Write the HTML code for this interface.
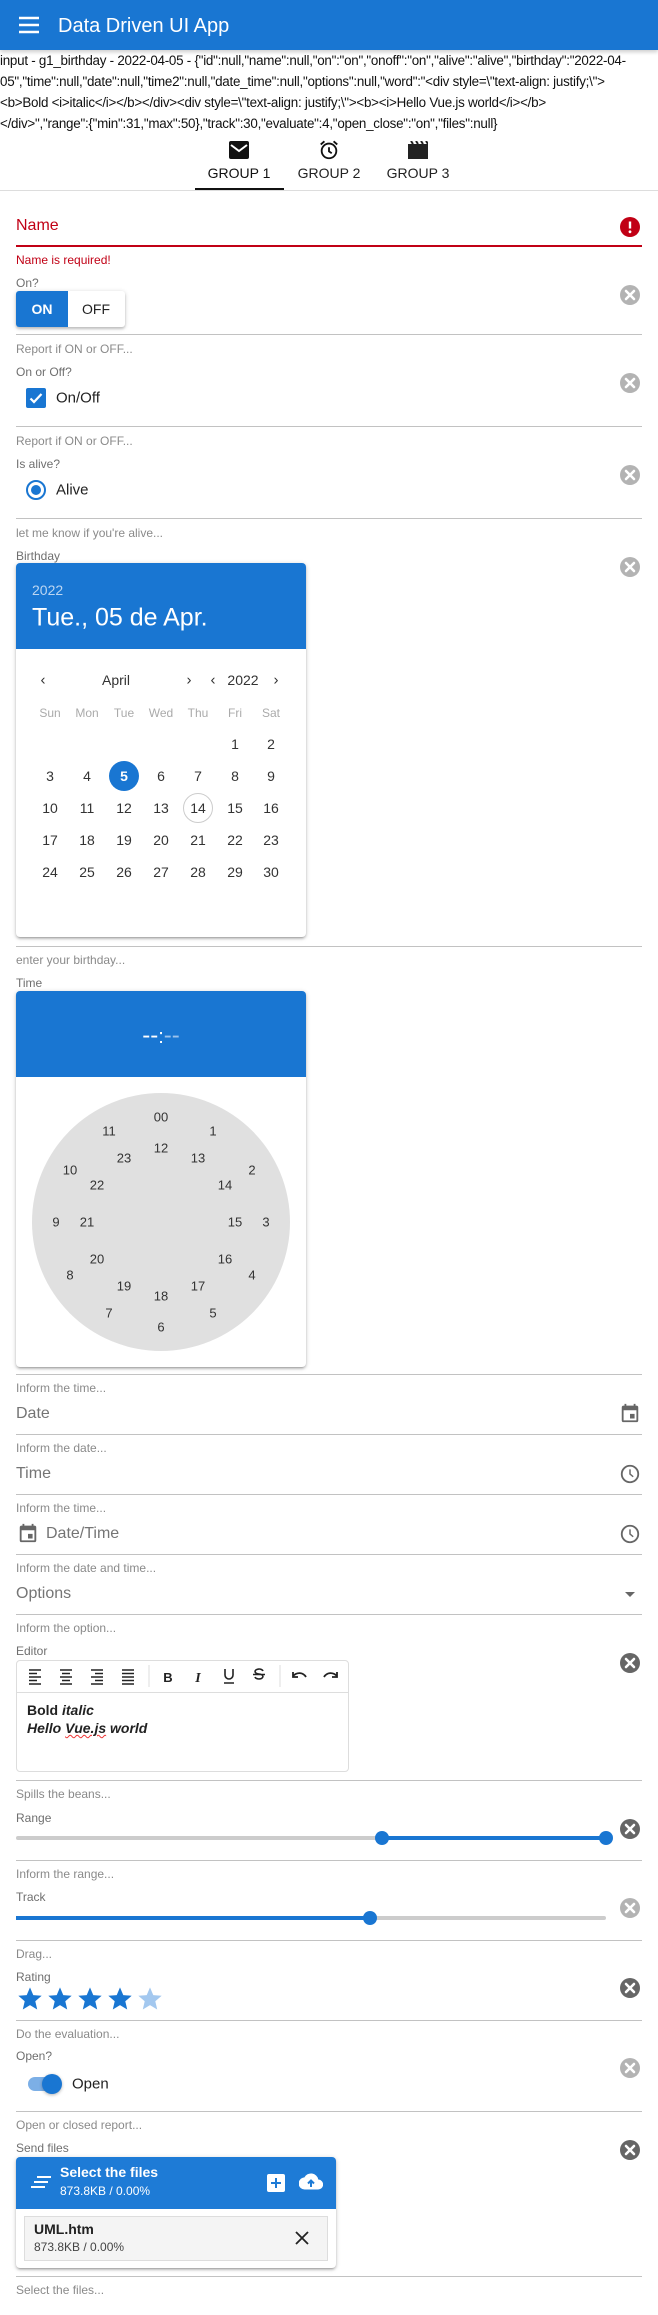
<!DOCTYPE html>
<html><head><meta charset="utf-8">
<style>
*{margin:0;padding:0;box-sizing:border-box}
body{width:658px;height:2315px;position:relative;overflow:hidden;background:#fff;font-family:"Liberation Sans",Arial,sans-serif;color:#212121}
.a{position:absolute}
.t{position:absolute;white-space:nowrap;line-height:1;transform:translateY(-50%)}
.c{position:absolute;white-space:nowrap;line-height:1;transform:translate(-50%,-50%)}
.hint{font-size:12px;color:#8a8a8a;left:16px}
.lab{font-size:12px;color:#6f6f6f;left:16px}
.val{font-size:16px;color:#757575;left:16px}
.hr{position:absolute;left:16px;width:626px;height:1px;background:#c2c2c2}
.clr{position:absolute;left:620px;width:20px;height:20px}
.card{position:absolute;background:#fff;border-radius:4px;box-shadow:0 1px 5px rgba(0,0,0,.2),0 2px 2px rgba(0,0,0,.14),0 3px 1px -2px rgba(0,0,0,.12);overflow:hidden}
.d{font-size:14px;color:#333}
.n{font-size:13px;color:#333}
</style></head><body>
<svg width="0" height="0" style="position:absolute"><defs>
<symbol id="x" viewBox="0 0 20 20"><circle cx="10" cy="10" r="10" fill="currentColor"/><path d="M6 6L14 14M14 6L6 14" stroke="#fff" stroke-width="2.6" stroke-linecap="round"/></symbol>
<symbol id="star" viewBox="0 0 24 24"><path d="M12 17.27L18.18 21l-1.64-7.03L22 9.24l-7.19-.61L12 2 9.19 8.63 2 9.24l5.46 4.73L5.82 21z" fill="currentColor"/></symbol>
<symbol id="clock" viewBox="0 0 24 24"><circle cx="12" cy="12" r="9" fill="none" stroke="currentColor" stroke-width="2"/><path d="M12 7v5l3.5 3" fill="none" stroke="currentColor" stroke-width="1.6"/></symbol>
<symbol id="cal" viewBox="0 0 24 24"><path d="M19 4h-1V2h-2v2H8V2H6v2H5a2 2 0 0 0-2 2v14a2 2 0 0 0 2 2h14a2 2 0 0 0 2-2V6a2 2 0 0 0-2-2zm0 16H5V9h14zM12 13h5v5h-5z" fill="currentColor"/></symbol>
</defs></svg>

<!-- header -->
<div class="a" style="left:0;top:0;width:658px;height:50px;background:#1976d2;box-shadow:0 2px 4px rgba(0,0,0,.2)"></div>
<svg class="a" style="left:19px;top:16px" width="20" height="18" viewBox="0 0 20 18"><path d="M0 2h20M0 9h20M0 16h20" stroke="#fff" stroke-width="2.4"/></svg>
<div class="t" style="left:58px;top:26px;font-size:20px;color:#fff">Data Driven UI App</div>

<!-- json -->
<div class="a" style="left:0;top:50px;width:658px;font-size:13.4px;line-height:21px;color:#111;letter-spacing:-0.25px;white-space:nowrap">input - g1_birthday - 2022-04-05 - {"id":null,"name":null,"on":"on","onoff":"on","alive":"alive","birthday":"2022-04-<br>05","time":null,"date":null,"time2":null,"date_time":null,"options":null,"word":"&lt;div style=\"text-align: justify;\"&gt;<br>&lt;b&gt;Bold &lt;i&gt;italic&lt;/i&gt;&lt;/b&gt;&lt;/div&gt;&lt;div style=\"text-align: justify;\"&gt;&lt;b&gt;&lt;i&gt;Hello Vue.js world&lt;/i&gt;&lt;/b&gt;<br>&lt;/div&gt;","range":{"min":31,"max":50},"track":30,"evaluate":4,"open_close":"on","files":null}</div>

<!-- tabs -->
<svg class="a" style="left:229px;top:141px" width="20" height="18" viewBox="0 0 20 18"><rect x="0" y="0" width="20" height="18" rx="2" fill="#111"/><path d="M2 4l8 6 8-6" fill="none" stroke="#fff" stroke-width="2"/></svg>
<svg class="a" style="left:318px;top:139px" width="22" height="22" viewBox="0 0 24 24"><circle cx="12" cy="13" r="8" fill="none" stroke="#111" stroke-width="2"/><path d="M12 9v4.5l3 2M3 6l4-3.5M21 6l-4-3.5" fill="none" stroke="#111" stroke-width="2"/></svg>
<svg class="a" style="left:408px;top:141px" width="20" height="18" viewBox="0 0 20 18"><path d="M0 3h20v15H0z" fill="#222"/><path d="M3 0l2 3M8 0l2 3M13 0l2 3M18 0l2 3" stroke="#222" stroke-width="2"/></svg>
<div class="c" style="left:239px;top:173px;font-size:14px;color:#111">GROUP 1</div>
<div class="c" style="left:329px;top:173px;font-size:14px;color:#222">GROUP 2</div>
<div class="c" style="left:418px;top:173px;font-size:14px;color:#222">GROUP 3</div>
<div class="a" style="left:0;top:190px;width:658px;height:1px;background:#ddd"></div>
<div class="a" style="left:195px;top:188px;width:89px;height:2px;background:#111"></div>

<!-- name -->
<div class="t" style="left:16px;top:226px;font-size:16px;color:#c10015">Name</div>
<svg class="a" style="left:620px;top:217px" width="20" height="20" viewBox="0 0 20 20"><circle cx="10" cy="10" r="10" fill="#c10015"/><path d="M10 4.5v7" stroke="#fff" stroke-width="2.4"/><circle cx="10" cy="14.8" r="1.4" fill="#fff"/></svg>
<div class="a" style="left:16px;top:245px;width:626px;height:2px;background:#c10015"></div>
<div class="t" style="left:16px;top:260px;font-size:12px;color:#c10015">Name is required!</div>

<!-- on -->
<div class="t lab" style="top:283px">On?</div>
<div class="a" style="left:16px;top:291px;width:109px;height:36px;border-radius:3px;box-shadow:0 1px 5px rgba(0,0,0,.2),0 2px 2px rgba(0,0,0,.14);overflow:hidden;background:#fff">
<div class="a" style="left:0;top:0;width:52px;height:36px;background:#1976d2"></div>
<div class="c" style="left:26px;top:18px;color:#fff;font-weight:bold;font-size:14px">ON</div>
<div class="c" style="left:80px;top:18px;color:#222;font-size:14px">OFF</div></div>
<svg class="clr" style="top:285px;color:#b3b3b3"><use href="#x"/></svg>
<div class="hr" style="top:334px"></div>
<div class="t hint" style="top:349px">Report if ON or OFF...</div>
<div class="t lab" style="top:372px">On or Off?</div>
<svg class="clr" style="top:373px;color:#b3b3b3"><use href="#x"/></svg>
<svg class="a" style="left:26px;top:388px" width="20" height="20" viewBox="0 0 20 20"><rect width="20" height="20" rx="2" fill="#1976d2"/><path d="M4.5 10.5l3.5 3.5 7.5-8" fill="none" stroke="#fff" stroke-width="2.2"/></svg>
<div class="t" style="left:56px;top:398px;font-size:15px;color:#222">On/Off</div>
<div class="hr" style="top:426px"></div>
<div class="t hint" style="top:441px">Report if ON or OFF...</div>
<div class="t lab" style="top:464px">Is alive?</div>
<svg class="clr" style="top:465px;color:#b3b3b3"><use href="#x"/></svg>
<svg class="a" style="left:26px;top:480px" width="20" height="20" viewBox="0 0 20 20"><circle cx="10" cy="10" r="9" fill="none" stroke="#1976d2" stroke-width="2"/><circle cx="10" cy="10" r="5" fill="#1976d2"/></svg>
<div class="t" style="left:56px;top:490px;font-size:15px;color:#222">Alive</div>
<div class="hr" style="top:518px"></div>
<div class="t hint" style="top:533px">let me know if you're alive...</div>
<div class="t lab" style="top:556px">Birthday</div>
<svg class="clr" style="top:557px;color:#b3b3b3"><use href="#x"/></svg>

<!-- calendar -->
<div class="card" style="left:16px;top:563px;width:290px;height:374px">
<div class="a" style="left:0;top:0;width:290px;height:86px;background:#1976d2"></div>
<div class="t" style="left:16px;top:27px;font-size:14px;color:#bcd6f2">2022</div>
<div class="t" style="left:16px;top:55px;font-size:25px;color:#fff">Tue., 05 de Apr.</div>
</div>
<div class="c d" style="left:43px;top:680px;font-size:15px">‹</div>
<div class="c d" style="left:116px;top:680px">April</div>
<div class="c d" style="left:189px;top:680px;font-size:15px">›</div>
<div class="c d" style="left:213px;top:680px;font-size:15px">‹</div>
<div class="c d" style="left:243px;top:680px">2022</div>
<div class="c d" style="left:276px;top:680px;font-size:15px">›</div>
<div class="c" style="left:50px;top:713px;font-size:12px;color:#aaa">Sun</div>
<div class="c" style="left:87px;top:713px;font-size:12px;color:#aaa">Mon</div>
<div class="c" style="left:124px;top:713px;font-size:12px;color:#aaa">Tue</div>
<div class="c" style="left:161px;top:713px;font-size:12px;color:#aaa">Wed</div>
<div class="c" style="left:198px;top:713px;font-size:12px;color:#aaa">Thu</div>
<div class="c" style="left:235px;top:713px;font-size:12px;color:#aaa">Fri</div>
<div class="c" style="left:271px;top:713px;font-size:12px;color:#aaa">Sat</div>
<div class="c d" style="left:235px;top:744px">1</div><div class="c d" style="left:271px;top:744px">2</div>
<div class="c d" style="left:50px;top:776px">3</div><div class="c d" style="left:87px;top:776px">4</div>
<div class="a" style="left:109px;top:761px;width:30px;height:30px;border-radius:50%;background:#1976d2"></div>
<div class="c" style="left:124px;top:776px;font-size:14px;color:#fff;font-weight:bold">5</div>
<div class="c d" style="left:161px;top:776px">6</div><div class="c d" style="left:198px;top:776px">7</div><div class="c d" style="left:235px;top:776px">8</div><div class="c d" style="left:271px;top:776px">9</div>
<div class="c d" style="left:50px;top:808px">10</div><div class="c d" style="left:87px;top:808px">11</div><div class="c d" style="left:124px;top:808px">12</div><div class="c d" style="left:161px;top:808px">13</div>
<div class="a" style="left:183px;top:793px;width:30px;height:30px;border-radius:50%;border:1px solid #ccc"></div>
<div class="c d" style="left:198px;top:808px">14</div><div class="c d" style="left:235px;top:808px">15</div><div class="c d" style="left:271px;top:808px">16</div>
<div class="c d" style="left:50px;top:840px">17</div><div class="c d" style="left:87px;top:840px">18</div><div class="c d" style="left:124px;top:840px">19</div><div class="c d" style="left:161px;top:840px">20</div><div class="c d" style="left:198px;top:840px">21</div><div class="c d" style="left:235px;top:840px">22</div><div class="c d" style="left:271px;top:840px">23</div>
<div class="c d" style="left:50px;top:872px">24</div><div class="c d" style="left:87px;top:872px">25</div><div class="c d" style="left:124px;top:872px">26</div><div class="c d" style="left:161px;top:872px">27</div><div class="c d" style="left:198px;top:872px">28</div><div class="c d" style="left:235px;top:872px">29</div><div class="c d" style="left:271px;top:872px">30</div>
<div class="hr" style="top:946px"></div>
<div class="t hint" style="top:960px">enter your birthday...</div>
<div class="t lab" style="top:983px">Time</div>

<!-- time -->
<div class="card" style="left:16px;top:991px;width:290px;height:376px">
<div class="a" style="left:0;top:0;width:290px;height:86px;background:#1976d2"></div>
<div class="c" style="left:145px;top:45px;font-size:24px;color:#fff">--<span style="font-size:20px">:</span><span style="color:#9cc2ec">--</span></div>
<div class="a" style="left:16px;top:102px;width:258px;height:258px;border-radius:50%;background:#e0e0e0"></div>
</div>
<div class="c n" style="left:161px;top:1117px">00</div><div class="c n" style="left:213px;top:1131px">1</div><div class="c n" style="left:252px;top:1170px">2</div><div class="c n" style="left:266px;top:1222px">3</div><div class="c n" style="left:252px;top:1275px">4</div><div class="c n" style="left:213px;top:1313px">5</div><div class="c n" style="left:161px;top:1327px">6</div><div class="c n" style="left:109px;top:1313px">7</div><div class="c n" style="left:70px;top:1275px">8</div><div class="c n" style="left:56px;top:1222px">9</div><div class="c n" style="left:70px;top:1170px">10</div><div class="c n" style="left:109px;top:1131px">11</div>
<div class="c n" style="left:161px;top:1148px">12</div><div class="c n" style="left:198px;top:1158px">13</div><div class="c n" style="left:225px;top:1185px">14</div><div class="c n" style="left:235px;top:1222px">15</div><div class="c n" style="left:225px;top:1259px">16</div><div class="c n" style="left:198px;top:1286px">17</div><div class="c n" style="left:161px;top:1296px">18</div><div class="c n" style="left:124px;top:1286px">19</div><div class="c n" style="left:97px;top:1259px">20</div><div class="c n" style="left:87px;top:1222px">21</div><div class="c n" style="left:97px;top:1185px">22</div><div class="c n" style="left:124px;top:1158px">23</div>
<div class="hr" style="top:1374px"></div>
<div class="t hint" style="top:1388px">Inform the time...</div>

<!-- date/time fields -->
<div class="t val" style="top:1414px">Date</div>
<svg class="a" style="left:619px;top:1402px;color:#666" width="22" height="22"><use href="#cal"/></svg>
<div class="hr" style="top:1434px"></div>
<div class="t hint" style="top:1448px">Inform the date...</div>
<div class="t val" style="top:1474px">Time</div>
<svg class="a" style="left:619px;top:1463px;color:#666" width="22" height="22"><use href="#clock"/></svg>
<div class="hr" style="top:1494px"></div>
<div class="t hint" style="top:1508px">Inform the time...</div>
<svg class="a" style="left:17px;top:1522px;color:#666" width="22" height="22"><use href="#cal"/></svg>
<div class="t val" style="left:46px;top:1534px">Date/Time</div>
<svg class="a" style="left:619px;top:1523px;color:#666" width="22" height="22"><use href="#clock"/></svg>
<div class="hr" style="top:1554px"></div>
<div class="t hint" style="top:1568px">Inform the date and time...</div>
<div class="t val" style="top:1594px">Options</div>
<svg class="a" style="left:625px;top:1592px" width="10" height="5"><path d="M0 0h10L5 5z" fill="#666"/></svg>
<div class="hr" style="top:1614px"></div>
<div class="t hint" style="top:1628px">Inform the option...</div>
<div class="t lab" style="top:1651px">Editor</div>
<svg class="clr" style="top:1653px;color:#666"><use href="#x"/></svg>

<!-- editor -->
<div class="a" style="left:16px;top:1660px;width:333px;height:112px;border:1px solid #ddd;border-radius:4px"></div>
<div class="a" style="left:17px;top:1692px;width:331px;height:1px;background:#ddd"></div>
<svg class="a" style="left:16px;top:1660px" width="333" height="32" viewBox="0 0 333 32">
<g stroke="#222" stroke-width="1.6">
<path d="M13 10h12M13 13.5h8M13 17h12M13 20.5h8M13 24h12"/>
<path d="M44 10h12M46 13.5h8M44 17h12M46 20.5h8M44 24h12"/>
<path d="M75 10h12M79 13.5h8M75 17h12M79 20.5h8M75 24h12"/>
<path d="M106 10h12M106 13.5h12M106 17h12M106 20.5h12M106 24h12"/>
</g>
<path d="M133 5v22M264 5v22" stroke="#ddd"/>
<text x="152" y="22" font-family="Liberation Sans" font-weight="bold" font-size="13" fill="#222" text-anchor="middle">B</text>
<text x="182" y="22" font-family="Liberation Serif" font-style="italic" font-weight="bold" font-size="14" fill="#222" text-anchor="middle">I</text>
<path d="M209 9v6a4 4 0 0 0 8 0V9M208 23h10" fill="none" stroke="#222" stroke-width="1.6"/>
<path d="M247 11a4 2.5 0 1 0-4 3a4 2.5 0 1 1-4 3M237 14.5h12" fill="none" stroke="#222" stroke-width="1.6"/>
<path d="M277 16c4-4 10-4 13 1M277 12v5h5" fill="none" stroke="#222" stroke-width="1.8"/>
<path d="M321 16c-4-4-10-4-13 1M321 12v5h-5" fill="none" stroke="#222" stroke-width="1.8"/>
</svg>
<div class="t" style="left:27px;top:1710px;font-size:14px;font-weight:bold;color:#222">Bold <i>italic</i></div>
<div class="t" style="left:27px;top:1728px;font-size:14px;font-weight:bold;font-style:italic;color:#222">Hello <span style="text-decoration:underline wavy #e33;text-decoration-thickness:1px">Vue.js</span> world</div>
<div class="hr" style="top:1780px"></div>
<div class="t hint" style="top:1794px">Spills the beans...</div>

<!-- range -->
<div class="t lab" style="top:1818px">Range</div>
<svg class="clr" style="top:1819px;color:#666"><use href="#x"/></svg>
<div class="a" style="left:16px;top:1836px;width:590px;height:4px;border-radius:2px;background:#ccc"></div>
<div class="a" style="left:382px;top:1836px;width:224px;height:4px;background:#1976d2"></div>
<div class="a" style="left:375px;top:1831px;width:14px;height:14px;border-radius:50%;background:#1976d2"></div>
<div class="a" style="left:599px;top:1831px;width:14px;height:14px;border-radius:50%;background:#1976d2"></div>
<div class="hr" style="top:1860px"></div>
<div class="t hint" style="top:1874px">Inform the range...</div>
<div class="t lab" style="top:1897px">Track</div>
<svg class="clr" style="top:1898px;color:#b3b3b3"><use href="#x"/></svg>
<div class="a" style="left:16px;top:1916px;width:590px;height:4px;border-radius:2px;background:#ccc"></div>
<div class="a" style="left:16px;top:1916px;width:354px;height:4px;background:#1976d2"></div>
<div class="a" style="left:363px;top:1911px;width:14px;height:14px;border-radius:50%;background:#1976d2"></div>
<div class="hr" style="top:1940px"></div>
<div class="t hint" style="top:1954px">Drag...</div>
<div class="t lab" style="top:1977px">Rating</div>
<svg class="clr" style="top:1978px;color:#666"><use href="#x"/></svg>
<svg class="a" style="left:16px;top:1985px;color:#1976d2" width="28" height="28"><use href="#star"/></svg>
<svg class="a" style="left:46px;top:1985px;color:#1976d2" width="28" height="28"><use href="#star"/></svg>
<svg class="a" style="left:76px;top:1985px;color:#1976d2" width="28" height="28"><use href="#star"/></svg>
<svg class="a" style="left:106px;top:1985px;color:#1976d2" width="28" height="28"><use href="#star"/></svg>
<svg class="a" style="left:136px;top:1985px;color:#a3c8ef" width="28" height="28"><use href="#star"/></svg>
<div class="hr" style="top:2020px"></div>
<div class="t hint" style="top:2034px">Do the evaluation...</div>
<div class="t lab" style="top:2056px">Open?</div>
<svg class="clr" style="top:2058px;color:#b3b3b3"><use href="#x"/></svg>
<div class="a" style="left:28px;top:2077px;width:32px;height:14px;border-radius:7px;background:#7cafe6"></div>
<div class="a" style="left:42px;top:2074px;width:20px;height:20px;border-radius:50%;background:#1976d2;box-shadow:0 1px 3px rgba(0,0,0,.3)"></div>
<div class="t" style="left:72px;top:2084px;font-size:15px;color:#222">Open</div>
<div class="hr" style="top:2111px"></div>
<div class="t hint" style="top:2125px">Open or closed report...</div>
<div class="t lab" style="top:2148px">Send files</div>
<svg class="clr" style="top:2140px;color:#666"><use href="#x"/></svg>

<!-- files -->
<div class="card" style="left:16px;top:2157px;width:320px;height:111px">
<div class="a" style="left:0;top:0;width:320px;height:52px;background:#1e7bd6"></div>
<svg class="a" style="left:15px;top:18px" width="20" height="14"><path d="M6 2h14M3 7h14M0 12h14" stroke="#fff" stroke-width="2"/></svg>
<div class="t" style="left:44px;top:15px;font-size:14px;font-weight:bold;color:#fff">Select the files</div>
<div class="t" style="left:44px;top:34px;font-size:12px;color:#fff">873.8KB / 0.00%</div>
<svg class="a" style="left:251px;top:17px" width="18" height="18"><rect width="18" height="18" rx="2" fill="#fff"/><path d="M9 4v10M4 9h10" stroke="#1e7bd6" stroke-width="2"/></svg>
<svg class="a" style="left:283px;top:15px" width="24" height="20" viewBox="0 0 24 20"><path d="M19.3 7.5A7.5 7.5 0 0 0 5.3 5.5 6 6 0 0 0 6 17.5h13a5 5 0 0 0 .3-10z" fill="#fff"/><path d="M12 15V9M9 11.5L12 8.5l3 3" fill="none" stroke="#1e7bd6" stroke-width="2"/></svg>
<div class="a" style="left:8px;top:59px;width:304px;height:45px;background:#f4f4f4;border:1px solid #ddd"></div>
<div class="t" style="left:18px;top:72px;font-size:14px;font-weight:bold;color:#222">UML.htm</div>
<div class="t" style="left:18px;top:90px;font-size:12px;color:#444">873.8KB / 0.00%</div>
<svg class="a" style="left:279px;top:74px" width="14" height="14"><path d="M1 1l12 12M13 1L1 13" stroke="#222" stroke-width="1.8"/></svg>
</div>
<div class="hr" style="top:2276px"></div>
<div class="t hint" style="top:2290px">Select the files...</div>
</body></html>
